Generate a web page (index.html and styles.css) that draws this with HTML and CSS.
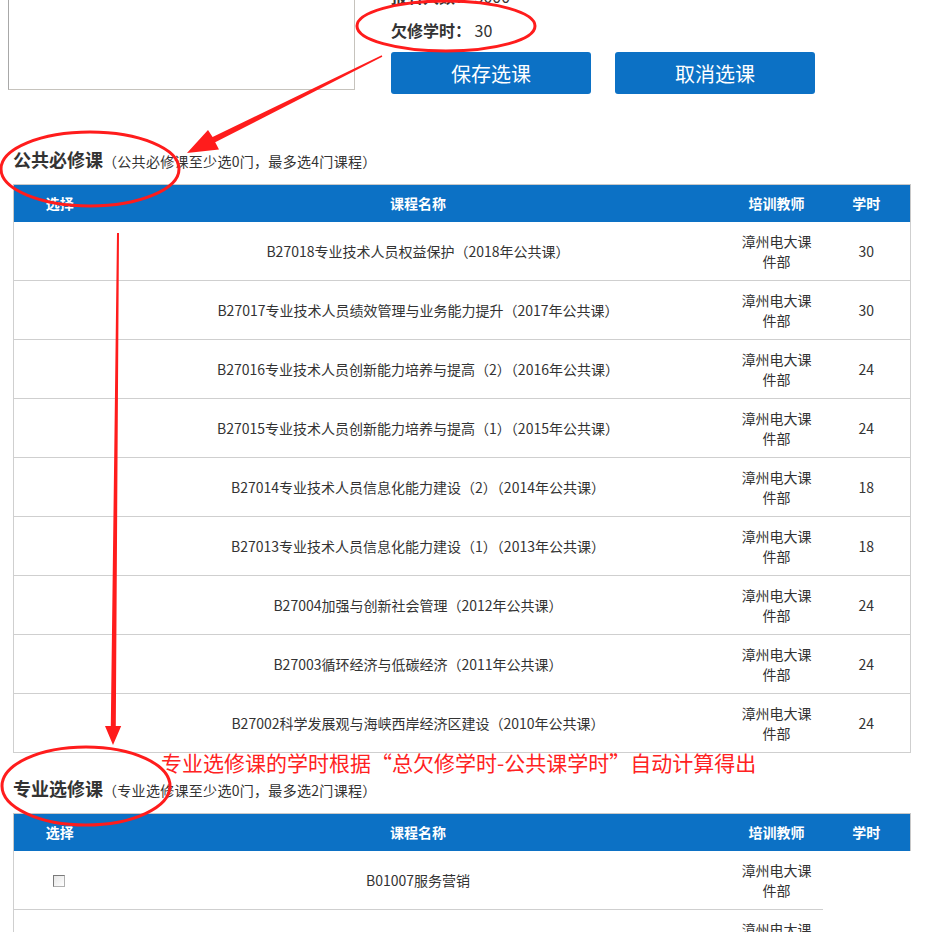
FILE: index.html
```html
<!DOCTYPE html>
<html lang="zh-CN">
<head>
<meta charset="utf-8">
<title>选课</title>
<link rel="stylesheet" href="styles.css">
</head>
<body>
<div class="page">
  <div class="top">
    <div class="memo"></div>
    <div class="info">
      <div class="info-line"><b>报名人数：</b> 3000</div>
      <div class="info-line"><b>欠修学时：</b> 30</div>
      <div class="btns">
        <button class="btn">保存选课</button>
        <button class="btn">取消选课</button>
      </div>
    </div>
  </div>

  <div class="section first">
    <div class="sec-title"><h2>公共必修课</h2><span class="sec-sub">（公共必修课至少选0门，最多选4门课程）</span></div>
    <table class="course">
      <colgroup><col class="c-sel"><col class="c-name"><col class="c-tea"><col class="c-hrs"></colgroup>
      <thead>
        <tr><th class="sel">选择</th><th>课程名称</th><th>培训教师</th><th class="hrs">学时</th></tr>
      </thead>
      <tbody>
        <tr><td class="sel"></td><td>B27018专业技术人员权益保护（2018年公共课）</td><td>漳州电大课件部</td><td class="hrs">30</td></tr>
        <tr><td class="sel"></td><td>B27017专业技术人员绩效管理与业务能力提升（2017年公共课）</td><td>漳州电大课件部</td><td class="hrs">30</td></tr>
        <tr><td class="sel"></td><td>B27016专业技术人员创新能力培养与提高（2）（2016年公共课）</td><td>漳州电大课件部</td><td class="hrs">24</td></tr>
        <tr><td class="sel"></td><td>B27015专业技术人员创新能力培养与提高（1）（2015年公共课）</td><td>漳州电大课件部</td><td class="hrs">24</td></tr>
        <tr><td class="sel"></td><td>B27014专业技术人员信息化能力建设（2）（2014年公共课）</td><td>漳州电大课件部</td><td class="hrs">18</td></tr>
        <tr><td class="sel"></td><td>B27013专业技术人员信息化能力建设（1）（2013年公共课）</td><td>漳州电大课件部</td><td class="hrs">18</td></tr>
        <tr><td class="sel"></td><td>B27004加强与创新社会管理（2012年公共课）</td><td>漳州电大课件部</td><td class="hrs">24</td></tr>
        <tr><td class="sel"></td><td>B27003循环经济与低碳经济（2011年公共课）</td><td>漳州电大课件部</td><td class="hrs">24</td></tr>
        <tr><td class="sel"></td><td>B27002科学发展观与海峡西岸经济区建设（2010年公共课）</td><td>漳州电大课件部</td><td class="hrs">24</td></tr>
      </tbody>
    </table>
  </div>

  <div class="section">
    <div class="sec-title"><h2>专业选修课</h2><span class="sec-sub">（专业选修课至少选0门，最多选2门课程）</span></div>
    <table class="course">
      <colgroup><col class="c-sel"><col class="c-name"><col class="c-tea"><col class="c-hrs"></colgroup>
      <thead>
        <tr><th class="sel">选择</th><th>课程名称</th><th>培训教师</th><th class="hrs">学时</th></tr>
      </thead>
      <tbody>
        <tr><td class="sel"><input type="checkbox" class="chk"></td><td>B01007服务营销</td><td>漳州电大课件部</td></tr>
        <tr><td class="sel"><input type="checkbox" class="chk"></td><td>B01006商务谈判</td><td>漳州电大课件部</td></tr>
      </tbody>
    </table>
  </div>
</div>

<div class="annot">
  <svg class="annot-svg" width="939" height="932" viewBox="0 0 939 932">
    <ellipse cx="446" cy="26" rx="89" ry="25" fill="none" stroke="#ff1c1c" stroke-width="3"/>
    <ellipse cx="90" cy="169" rx="89" ry="37" fill="none" stroke="#ff1c1c" stroke-width="3"/>
    <ellipse cx="86" cy="786" rx="84" ry="39" fill="none" stroke="#ff1c1c" stroke-width="3"/>
    <polygon fill="#ff1c1c" points="381.7,55.3 212.6,137 208,130 187,153 219,149.5 215.2,142.3 382.3,56.7"/>
    <polygon fill="#ff1c1c" points="117,233 110.8,726 105,726 113,745 121.2,726 115.8,726 119,233"/>
  </svg>
  <div class="annot-note">专业选修课的学时根据“总欠修学时-公共课学时”自动计算得出</div>
</div>
</body>
</html>
```
FILE: styles.css
```css
html, body {
  margin: 0;
  padding: 0;
}
body {
  position: relative;
  font-family: "Noto Sans CJK SC", "Microsoft YaHei", sans-serif;
  color: #333;
  background: #fff;
  font-size: 14px;
}
.page {
  padding: 0 8px;
}
.top {
  display: flex;
  align-items: flex-start;
  margin-top: -21px;
}
.memo {
  width: 345px;
  height: 109px;
  border: 1px solid #c6c3bd;
  border-left-color: #a8a8a8;
  background: #fff;
}
.info {
  margin-left: 36px;
  font-size: 16px;
}
.info-line {
  line-height: 34px;
  height: 34px;
  white-space: pre;
}
.info-line b {
  font-weight: bold;
}
.btns {
  display: flex;
  gap: 24px;
  margin-top: 5px;
}
.btn {
  width: 200px;
  height: 42px;
  border: none;
  border-radius: 3px;
  background: #0c71c5;
  color: #fff;
  font-family: "Noto Sans CJK SC", "Microsoft YaHei", sans-serif;
  font-size: 20px;
  padding: 0;
}
.section {
  margin-left: 5px;
  margin-top: 24px;
}
.section.first {
  margin-top: 54px;
}
.sec-title {
  line-height: 22px;
  height: 24px;
  margin-bottom: 12px;
  white-space: nowrap;
}
.sec-title h2 {
  display: inline;
  font-size: 18px;
  font-weight: bold;
  margin: 0;
  color: #333;
}
.sec-sub {
  font-size: 14px;
  color: #333;
  letter-spacing: 0.3px;
}
.course {
  border-collapse: collapse;
  table-layout: fixed;
  width: 897px;
}
.c-sel { width: 92px; }
.c-name { width: 625px; }
.c-tea { width: 92px; }
.c-hrs { width: 88px; }
.course th {
  background: #0c71c5;
  color: #fff;
  font-weight: bold;
  font-size: 14px;
  line-height: 21px;
  padding: 8px 8px;
  border-top: 1px solid #c8c8c8;
  text-align: center;
}
.course th.sel { border-left: 1px solid #c8c8c8; }
.course th.hrs { border-right: 1px solid #c8c8c8; }
.course td {
  font-size: 14px;
  line-height: 20px;
  padding: 9px 8px;
  border-bottom: 1px solid #cfcfcf;
  text-align: center;
  vertical-align: middle;
  color: #333;
}
.course td.sel { border-left: 1px solid #cfcfcf; }
.course td.hrs { border-right: 1px solid #cfcfcf; }
.chk {
  appearance: none;
  -webkit-appearance: none;
  display: inline-block;
  width: 12px;
  height: 12px;
  margin: 0;
  border: 1px solid #7a7a7a;
  border-right-color: #b0b0b0;
  border-bottom-color: #b0b0b0;
  background: linear-gradient(135deg, #e6e6e6, #ffffff);
  vertical-align: middle;
  position: relative;
  top: -1px;
  left: -1px;
}
.annot {
  position: absolute;
  left: 0;
  top: 0;
  width: 939px;
  height: 932px;
  pointer-events: none;
}
.annot-svg {
  position: absolute;
  left: 0;
  top: 0;
}
.annot-note {
  position: absolute;
  left: 161px;
  top: 749px;
  font-size: 21px;
  line-height: 26px;
  color: #ff2222;
  white-space: nowrap;
}
```
